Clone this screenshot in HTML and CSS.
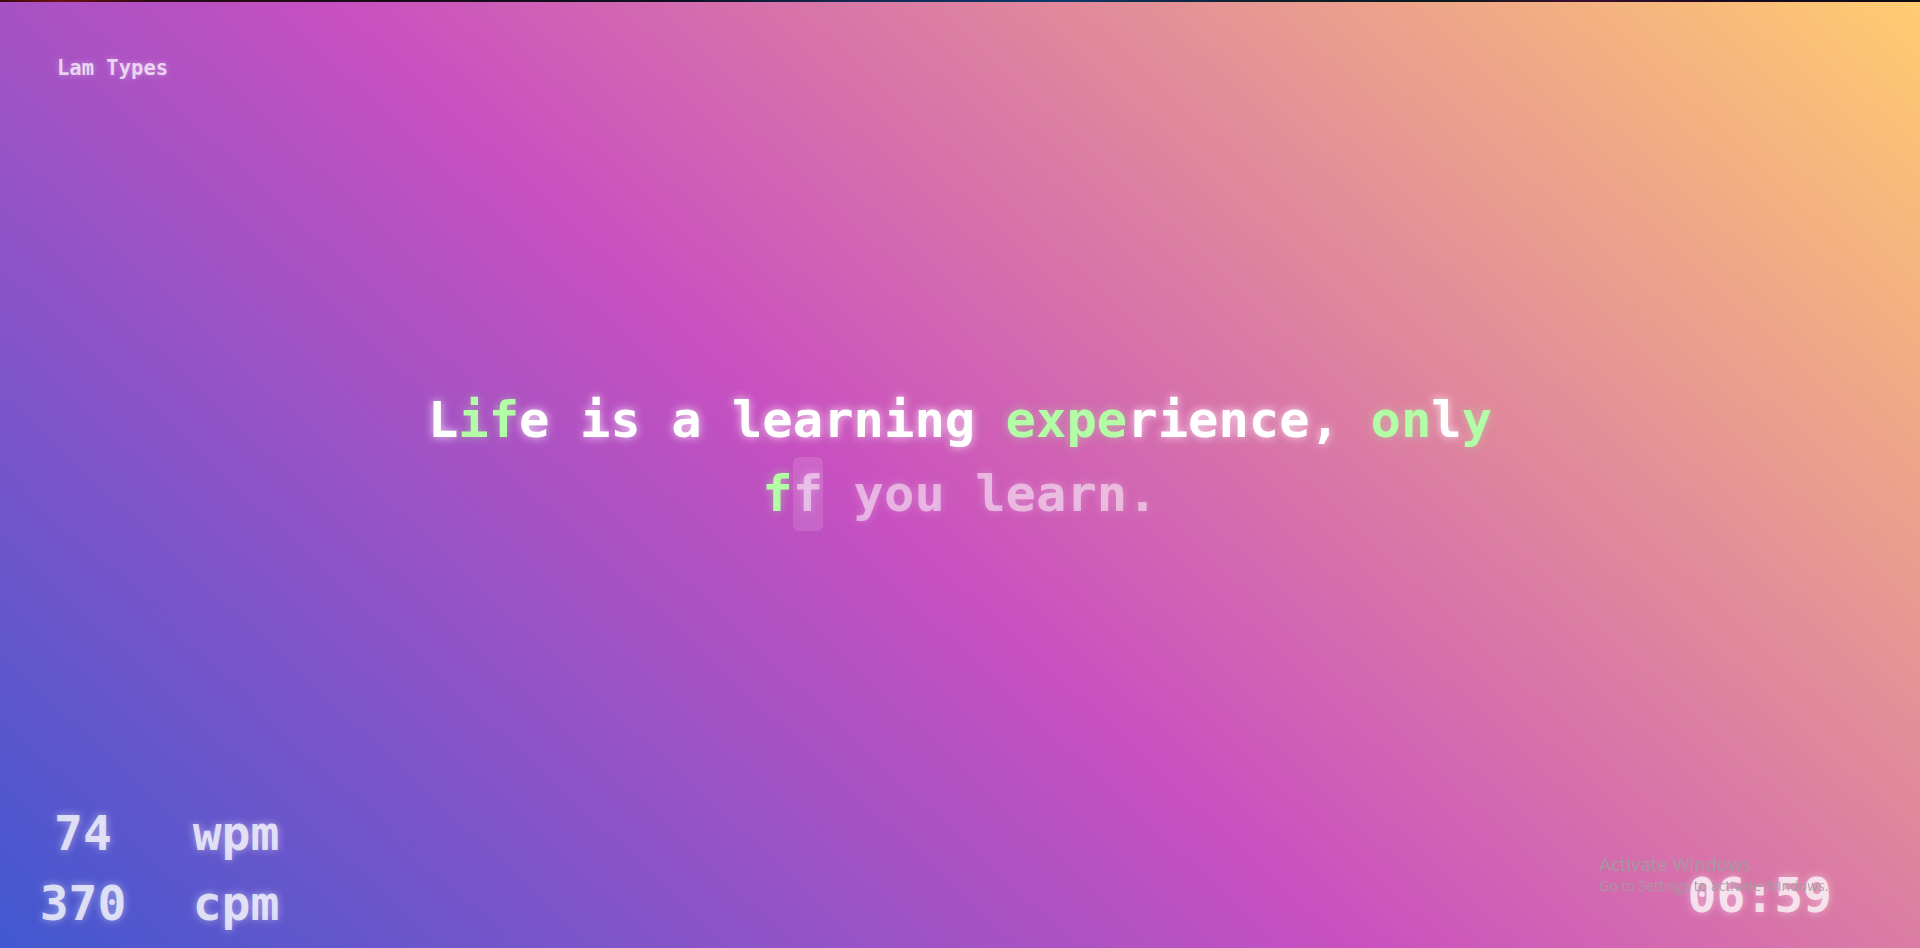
FILE: index.html
```html
<!DOCTYPE html>
<html lang="en">
<head>
<meta charset="utf-8">
<title>Lam Types</title>
<link rel="stylesheet" href="styles.css">
</head>
<body>
<div class="app">
  <div class="top-strip"></div>
  <header class="header">
    <span class="logo">Lam Types</span>
  </header>
  <main class="stage">
    <p class="quote"><span class="ok">L</span><span class="hit">i</span><span class="hit">f</span><span class="ok">e</span> <span class="ok">i</span><span class="ok">s</span> <span class="ok">a</span> <span class="ok">l</span><span class="ok">e</span><span class="ok">a</span><span class="ok">r</span><span class="ok">n</span><span class="ok">i</span><span class="ok">n</span><span class="ok">g</span> <span class="hit">e</span><span class="hit">x</span><span class="hit">p</span><span class="hit">e</span><span class="ok">r</span><span class="ok">i</span><span class="ok">e</span><span class="ok">n</span><span class="ok">c</span><span class="ok">e</span><span class="ok">,</span> <span class="hit">o</span><span class="hit">n</span><span class="ok">l</span><span class="hit">y</span> <span class="hit">f</span><span class="todo cursor">f</span><span class="todo"> you learn.</span></p>
  </main>
  <footer class="footer">
    <div class="stats">
      <span class="num">74</span><span class="unit">wpm</span>
      <span class="num">370</span><span class="unit">cpm</span>
    </div>
    <div class="timer">06:59</div>
  </footer>
</div>
<div class="watermark">
  <div class="wm-title">Activate Windows</div>
  <div class="wm-sub">Go to Settings to activate Windows.</div>
</div>
</body>
</html>
```
FILE: styles.css
```css
html, body {
  margin: 0;
  padding: 0;
  height: 100%;
  overflow: hidden;
}

body {
  background: linear-gradient(43deg, #4158D0 0%, #C850C0 46%, #FFCC70 100%);
  font-family: "DejaVu Sans Mono", "Liberation Mono", monospace;
  font-weight: bold;
  color: #fff;
}

.app {
  height: 100vh;
  display: flex;
  flex-direction: column;
}

.top-strip {
  height: 2px;
  flex: none;
  background: linear-gradient(90deg, #3a0a0a 0%, #6a1010 3%, #2a0a14 8%, #1a0a18 20%, #0d1020 35%, #132a55 45%, #0c3a6a 55%, #102030 65%, #0a1a1a 75%, #3a1030 82%, #1a0a20 90%, #0a0a14 100%);
}

.header {
  flex: none;
  padding: 56px 0 0 57px;
}

.logo {
  font-size: 20.5px;
  line-height: 20.5px;
  color: rgba(255, 255, 255, 0.72);
  text-shadow: 0 0 6px rgba(255, 255, 255, 0.35);
}

.stage {
  flex: 1;
  display: flex;
  align-items: center;
  justify-content: center;
  padding-top: 37px;
}

.quote {
  margin: 0;
  max-width: 1100px;
  text-align: center;
  font-size: 50.5px;
  line-height: 74px;
}

.ok {
  color: #fff;
  text-shadow: 0 0 10px rgba(255, 255, 255, 0.75);
}

.hit {
  color: #b2fda6;
  text-shadow: 0 0 10px rgba(178, 253, 166, 0.45);
}

.todo {
  color: rgba(255, 255, 255, 0.5);
  text-shadow: 0 0 10px rgba(255, 255, 255, 0.25);
}

.cursor {
  display: inline-block;
  background: rgba(255, 255, 255, 0.12);
  border-radius: 6px;
}

.footer {
  flex: none;
  display: flex;
  justify-content: space-between;
  align-items: flex-end;
}

.stats {
  display: grid;
  grid-template-columns: 110px 88px;
  column-gap: 54px;
  padding: 0 0 10px 28px;
  font-size: 48px;
  line-height: 70px;
  text-align: center;
  color: rgba(255, 255, 255, 0.75);
  text-shadow: 0 0 8px rgba(255, 255, 255, 0.45);
}

.timer {
  margin: 0 88px 18px 0;
  font-size: 48px;
  line-height: 70px;
  color: rgba(255, 255, 255, 0.72);
  text-shadow: 0 0 8px rgba(255, 255, 255, 0.45);
}

.watermark {
  position: fixed;
  left: 1599px;
  top: 852px;
  font-family: "Open Sans", "Noto Sans", sans-serif;
  font-weight: normal;
  color: rgba(160, 160, 160, 0.9);
  pointer-events: none;
}

.wm-title {
  font-size: 18.5px;
  line-height: 24px;
}

.wm-sub {
  font-size: 14px;
  line-height: 20px;
}
```
